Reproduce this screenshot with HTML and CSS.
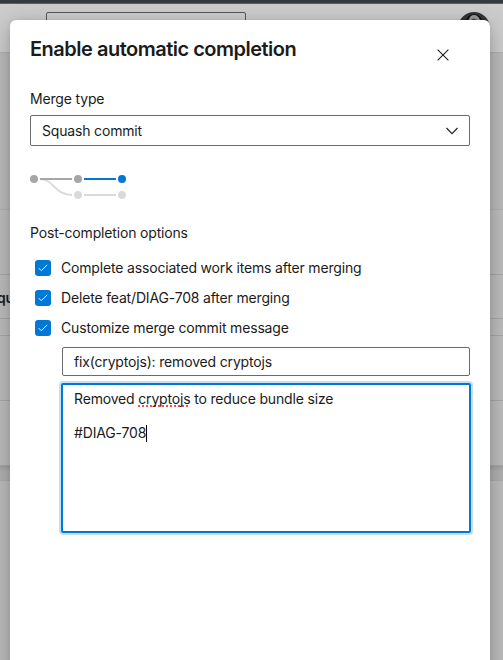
FILE: index.html
```html
<!DOCTYPE html>
<html lang="en">
<head>
<meta charset="utf-8">
<title>Enable automatic completion</title>
<link rel="stylesheet" href="styles.css">
</head>
<body>
<div class="page">
  <div class="topbar"></div>
  <header class="header">
    <div class="search"></div>
    <svg class="avatar" width="32" height="32" viewBox="0 0 32 32"><circle cx="16" cy="16" r="16" fill="#343434"/><ellipse cx="16" cy="12" rx="8" ry="9" fill="#444" stroke="#151515" stroke-width="2"/><path d="M11 8Q12 3 16 3Q20 3 22 8L19 8Q16 5 13 8Z" fill="#999"/></svg>
  </header>
  <div class="summary"></div>
  <div class="row row-title">qu</div>
  <div class="row row-thin"></div>
  <div class="row row-tall"></div>
  <div class="row row-tall"></div>
  <div class="gap"></div>
  <div class="lower"></div>
</div>
<section class="dialog">
  <header class="dialog-head">
    <h1>Enable automatic completion</h1>
    <svg class="close" width="12" height="12" viewBox="0 0 12 12"><path d="M.6.6 11.4 11.4M11.4.6.6 11.4" stroke="#222" stroke-width="1.15"/></svg>
  </header>
  <div class="label">Merge type</div>
  <div class="select"><span>Squash commit</span>
    <svg width="12" height="8" viewBox="0 0 12 8"><path d="M.5 1 6 6.6 11.5 1" fill="none" stroke="#222" stroke-width="1.2"/></svg>
  </div>
  <svg class="graph" width="98" height="26" viewBox="0 0 98 26">
    <path d="M10 5C24 5 24 21 42 21M54 21H86" fill="none" stroke="#dadada" stroke-width="2"/>
    <path d="M10 5H42" stroke="#a6a6a6" stroke-width="2"/>
    <path d="M54 5H86" stroke="#0078d4" stroke-width="2"/>
    <circle cx="4" cy="5" r="4" fill="#a6a6a6"/><circle cx="48" cy="5" r="4" fill="#a6a6a6"/><circle cx="92" cy="5" r="4" fill="#0078d4"/>
    <circle cx="48" cy="21" r="4" fill="#dadada"/><circle cx="92" cy="21" r="4" fill="#dadada"/>
  </svg>
  <div class="label options-label">Post-completion options</div>
  <div class="options">
    <div class="option"><span class="check"><svg width="10" height="8" viewBox="0 0 10 8"><path d="M.8 4.2 3.3 6.7 9.2.9" fill="none" stroke="#fff" stroke-width="1"/></svg></span><span>Complete associated work items after merging</span></div>
    <div class="option"><span class="check"><svg width="10" height="8" viewBox="0 0 10 8"><path d="M.8 4.2 3.3 6.7 9.2.9" fill="none" stroke="#fff" stroke-width="1"/></svg></span><span>Delete feat/DIAG-708 after merging</span></div>
    <div class="option"><span class="check"><svg width="10" height="8" viewBox="0 0 10 8"><path d="M.8 4.2 3.3 6.7 9.2.9" fill="none" stroke="#fff" stroke-width="1"/></svg></span><span>Customize merge commit message</span></div>
  </div>
  <div class="field">fix(cryptojs): removed cryptojs</div>
  <div class="message">
    <div>Removed <span class="misspelled">cryptojs</span> to reduce bundle size</div>
    <div class="reference"><span>#DIAG-708</span><i class="caret"></i></div>
  </div>
</section>
</body>
</html>
```
FILE: styles.css
```css
* { box-sizing: border-box; }
body {
  margin: 0;
  height: 660px;
  position: relative;
  overflow: hidden;
  background: #bbb;
  color: #1b1b1b;
  font: 14px/20px Inter, sans-serif;
  letter-spacing: -.17px;
}
svg { display: block; flex: none; }
.page { height: 660px; }
.topbar { height: 4px; background: #343a3e; border-bottom: 1px solid #5b5e60; }
.header {
  height: 49px;
  display: flex;
  align-items: flex-start;
  justify-content: space-between;
  padding: 8px 13px 0 46px;
  background: #cbcbcb;
  border-bottom: 1px solid #b0b0b0;
}
.search { width: 200px; height: 28px; border: 1px solid #555; border-radius: 2px; }
.summary { height: 157px; background: #b9b9b9; border-bottom: 1px solid #b0b0b0; }
.summary + .row { margin-top: 64px; }
.row { background: #bbb; border-bottom: 1px solid #a6a6a6; }
.row-title { height: 45px; border-top: 1px solid #a6a6a6; font-size: 14px; font-weight: 600; line-height: 46px; text-indent: -3px; }
.row-thin { height: 17px; }
.row-tall { height: 65px; }
.gap { height: 15px; background: linear-gradient(#9f9f9f, #afafaf 5px); border-bottom: 1px solid #a9a9a9; }
.lower { height: 179px; background: #bbb; }
.dialog {
  position: absolute;
  top: 20px;
  left: 10px;
  width: 480px;
  height: 660px;
  padding: 16px 20px;
  background: #fff;
  border-radius: 6px 6px 0 0;
  box-shadow: 0 6px 20px rgba(0, 0, 0, .26), 0 0 4px rgba(0, 0, 0, .08);
}
.dialog-head { display: flex; justify-content: space-between; height: 53px; padding-right: 21px; }
h1 { margin: 0; font-size: 20px; line-height: 26px; font-weight: 600; letter-spacing: -.5px; }
.close { margin-top: 13px; }
.label { height: 20px; }
.select {
  height: 31px;
  margin-top: 6px;
  padding: 0 11px;
  display: flex;
  align-items: center;
  justify-content: space-between;
  border: 1px solid #6b6b6b;
  border-radius: 2px;
}
.graph { margin-top: 28px; }
.options-label { margin-top: 23px; }
.options { margin-top: 10px; }
.option { height: 30px; display: flex; align-items: center; gap: 10px; padding-left: 5px; }
.check { width: 16px; height: 16px; display: grid; place-items: center; background: #0078d4; border-radius: 3px; }
.field { height: 29px; margin: 4px 0 0 32px; padding: 0 11px; line-height: 28px; border: 1px solid #6b6b6b; border-radius: 2px; }
.message {
  height: 150px;
  margin: 7px -1px 0 31px;
  padding: 4px 11px;
  border: 2px solid #0078d4;
  border-radius: 2px;
  box-shadow: 0 0 0 2px #c5e0f3;
}
.misspelled { text-decoration: underline dotted #ef5350 2px; text-decoration-skip-ink: none; text-underline-offset: 1px; }
.reference { display: flex; align-items: center; margin-top: 14px; }
.caret { width: 1px; height: 17px; background: #000; }
```
